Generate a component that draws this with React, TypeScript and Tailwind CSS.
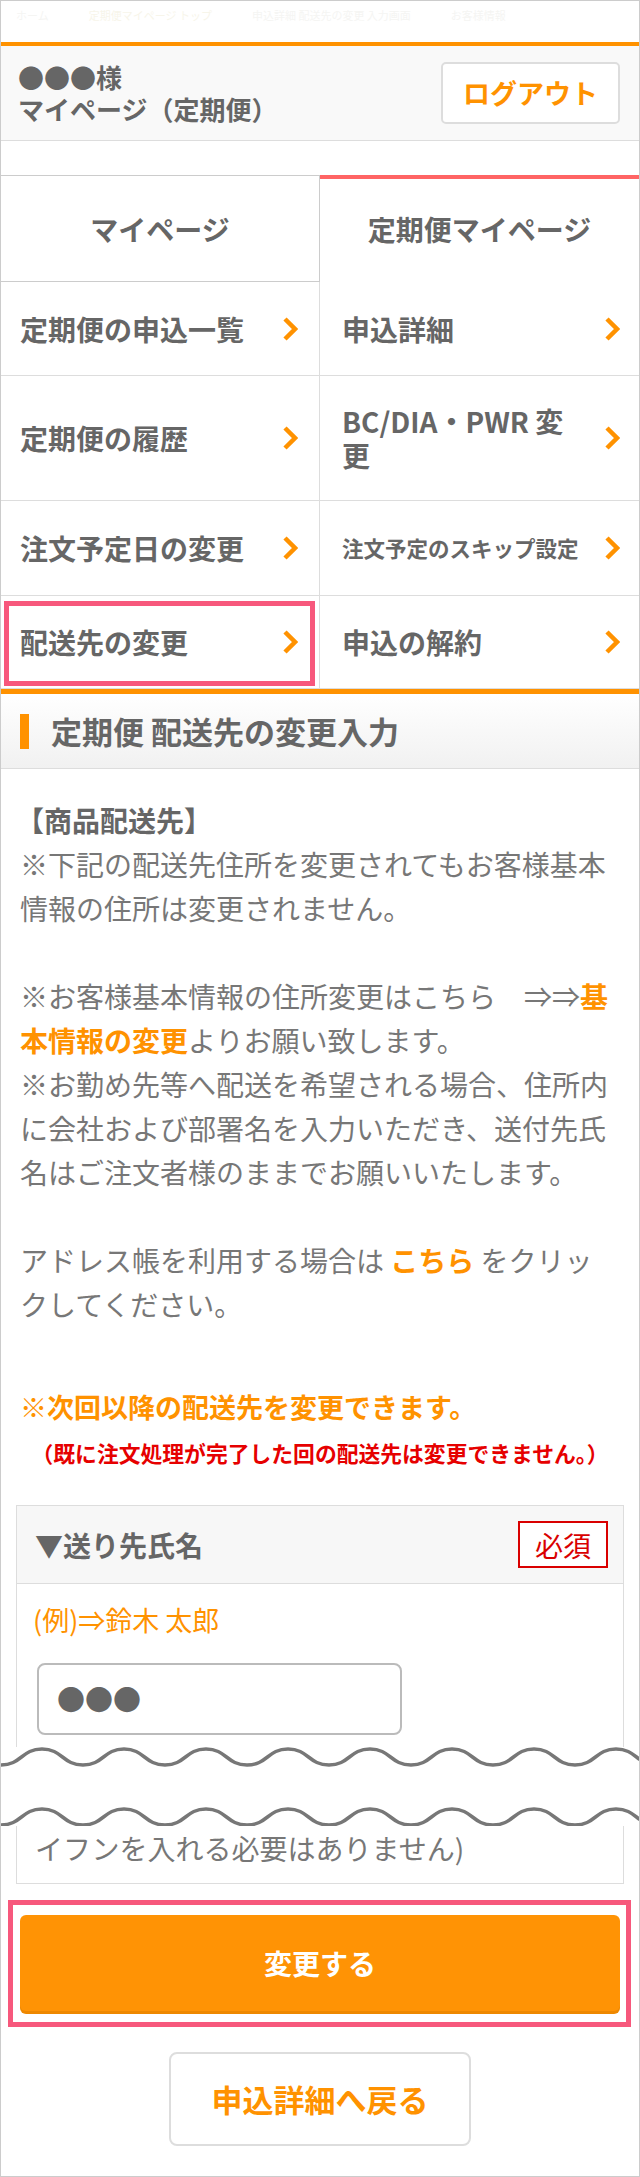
import React from 'react'

const ORANGE = '#ff9200'

function Chevron() {
  return (
    <svg width="16" height="24" viewBox="0 0 16 24" className="shrink-0">
      <polyline points="3,2 13,12 3,22" fill="none" stroke={ORANGE} strokeWidth="4.5" strokeLinejoin="miter" />
    </svg>
  )
}

function wavePath(cy: number, amp: number, period: number, width: number) {
  const h = period / 2
  let d = `M0 ${cy + amp} C${h / 2} ${cy + amp} ${h / 2} ${cy - amp} ${h} ${cy - amp}`
  let x = h
  let up = false
  while (x < width + period) {
    const nx = x + h
    const y = up ? cy - amp : cy + amp
    d += ` S${x + h / 2} ${y} ${nx} ${y}`
    x = nx
    up = !up
  }
  return d
}

const menu = [
  { left: '定期便の申込一覧', right: '申込詳細', h: 'h-[94px]' },
  { left: '定期便の履歴', right: 'BC/DIA・PWR 変更', h: 'h-[125px]' },
  { left: '注文予定日の変更', right: '注文予定のスキップ設定', h: 'h-[95px]', small: true },
  { left: '配送先の変更', right: '申込の解約', h: 'h-[93px]', active: true },
]

export default function App() {
  return (
    <div
      className="w-[640px] h-[2177px] overflow-hidden border border-[#ccc] bg-white text-[#666]"
      style={{ fontFamily: '"Noto Sans CJK JP", "Noto Sans", sans-serif' }}
    >
      {/* breadcrumb (faded) */}
      <div className="h-[41px] flex items-start pt-[6px] pl-[15px] gap-[40px] text-[11px] text-[#f5f5f3] whitespace-nowrap">
        <span>ホーム</span>
        <span className="text-[#f7f5ea]">定期便マイページ トップ</span>
        <span>申込詳細 配送先の変更 入力画面</span>
        <span>お客様情報</span>
      </div>
      <div className="h-[4px] bg-[#ff9200]" />

      {/* header */}
      <div className="h-[95px] bg-[#f9f9f9] border-b border-[#ddd] flex items-center justify-between pl-[17px] pr-[19px]">
        <div className="text-[26px] leading-[32px] font-bold text-[#666]">
          <div>●●●様</div>
          <div>マイページ（定期便）</div>
        </div>
        <button className="w-[179px] h-[62px] bg-white border-2 border-[#ddd] rounded-[5px] text-[27px] font-bold text-[#ff9200]">
          ログアウト
        </button>
      </div>

      {/* tabs */}
      <div className="mt-[34px] flex h-[107px]">
        <div className="w-[319px] border-t border-r border-b border-[#ccc] flex items-center justify-center text-[28px] font-bold text-[#666]">
          マイページ
        </div>
        <div className="flex-1 border-t-4 border-[#ff6464] flex items-center justify-center text-[28px] font-bold text-[#666] pb-[4px]">
          定期便マイページ
        </div>
      </div>

      {/* menu */}
      {menu.map((row, i) => (
        <div key={i} className={`flex ${row.h} border-b border-[#ddd]`}>
          <div className="relative w-[319px] border-r border-[#ddd] flex items-center justify-between pl-[19px] pr-[21px]">
            <span className="text-[28px] font-bold leading-[34px] text-[#666]">{row.left}</span>
            <Chevron />
            {row.active && (
              <div className="absolute left-[3px] top-[5px] w-[311px] h-[85px] border-[5px] border-[#f7587c]" />
            )}
          </div>
          <div className="flex-1 flex items-center justify-between pl-[22px] pr-[19px]">
            <span
              className={`${row.small ? 'text-[21.5px]' : 'text-[28px]'} font-bold leading-[34px] text-[#666] max-w-[240px]`}
            >
              {row.right}
            </span>
            <Chevron />
          </div>
        </div>
      ))}
      <div className="h-[5px] bg-[#ff9200]" />

      {/* heading */}
      <div className="h-[75px] bg-gradient-to-b from-white to-[#f1f1f1] border-b border-[#ddd] flex items-center pl-[19px]">
        <div className="w-[9px] h-[35px] bg-[#ff9200]" />
        <h2 className="ml-[22px] text-[31px] font-bold text-[#666] leading-[44px]">定期便 配送先の変更入力</h2>
      </div>

      {/* notes */}
      <div className="px-[19px] pt-[29px]">
        <p className="text-[28px] leading-[44px] text-[#777]">
          <span className="font-bold text-[#666] -ml-[4px]">【商品配送先】</span>
          <br />
          ※下記の配送先住所を変更されてもお客様基本情報の住所は変更されません。
          <br />
          <br />
          ※お客様基本情報の住所変更はこちら　⇒⇒<span className="font-bold text-[#ff9200]">基本情報の変更</span>よりお願い致します。
          <br />
          ※お勤め先等へ配送を希望される場合、住所内に会社および部署名を入力いただき、送付先氏名はご注文者様のままでお願いいたします。
          <br />
          <br />
          アドレス帳を利用する場合は <span className="font-bold text-[#ff9200]">こちら</span> をクリックしてください。
        </p>
        <p className="mt-[59px] text-[27px] leading-[44px] font-bold text-[#ff9200]">※次回以降の配送先を変更できます。</p>
        <p className="mt-[8px] text-[21.8px] leading-[32px] font-bold text-[#e60000] text-center whitespace-nowrap">
          （既に注文処理が完了した回の配送先は変更できません。）
        </p>
      </div>

      {/* form box (top part) */}
      <div className="mt-[36px] mx-[15px] border-t border-x border-[#ddd]">
        <div className="h-[78px] bg-[#f7f7f7] border-b border-[#ddd] flex items-center justify-between pl-[18px] pr-[15px]">
          <span className="text-[28px] font-bold text-[#666]">▼送り先氏名</span>
          <span className="h-[47px] px-[15px] flex items-center bg-white border-2 border-[#d90000] text-[28px] text-[#d90000]">
            必須
          </span>
        </div>
        <div className="pl-[20px] pt-[16px] pb-[12px]">
          <div className="-ml-[4px] text-[27px] leading-[40px] text-[#ff9200]">(例)⇒鈴木 太郎</div>
          <div className="mt-[23px] w-[365px] h-[72px] border-2 border-[#bbb] rounded-[8px] flex items-center pl-[18px] text-[28px] text-[#666]">
            ●●●
          </div>
        </div>
      </div>

      {/* torn break */}
      <svg width="638" height="79" viewBox="0 0 638 79" className="block">
        <path d={wavePath(10, 8, 82, 638)} fill="none" stroke="#777" strokeWidth="3.5" />
        <path d={wavePath(70, 8, 82, 638)} fill="none" stroke="#777" strokeWidth="3.5" />
      </svg>

      {/* form box (bottom part) */}
      <div className="mx-[15px] h-[58px] border-x border-b border-[#ddd] pl-[18px]">
        <span className="text-[28px] leading-[44px] text-[#777]">イフンを入れる必要はありません)</span>
      </div>

      {/* submit */}
      <div className="mt-[16px] ml-[7px] mr-[8px] border-[5px] border-[#f7587c] pt-[10px] pb-[11px] pl-[7px] pr-[6px]">
        <button className="w-full h-[96px] rounded-[6px] bg-[#ff9305] shadow-[0_3px_0_#ee8800] text-[28px] font-bold text-white">
          変更する
        </button>
      </div>

      <div className="mt-[25px] flex justify-center">
        <button className="w-[302px] h-[94px] bg-white border-2 border-[#ddd] rounded-[8px] text-[31px] font-bold text-[#ff9200]">
          申込詳細へ戻る
        </button>
      </div>
    </div>
  )
}
